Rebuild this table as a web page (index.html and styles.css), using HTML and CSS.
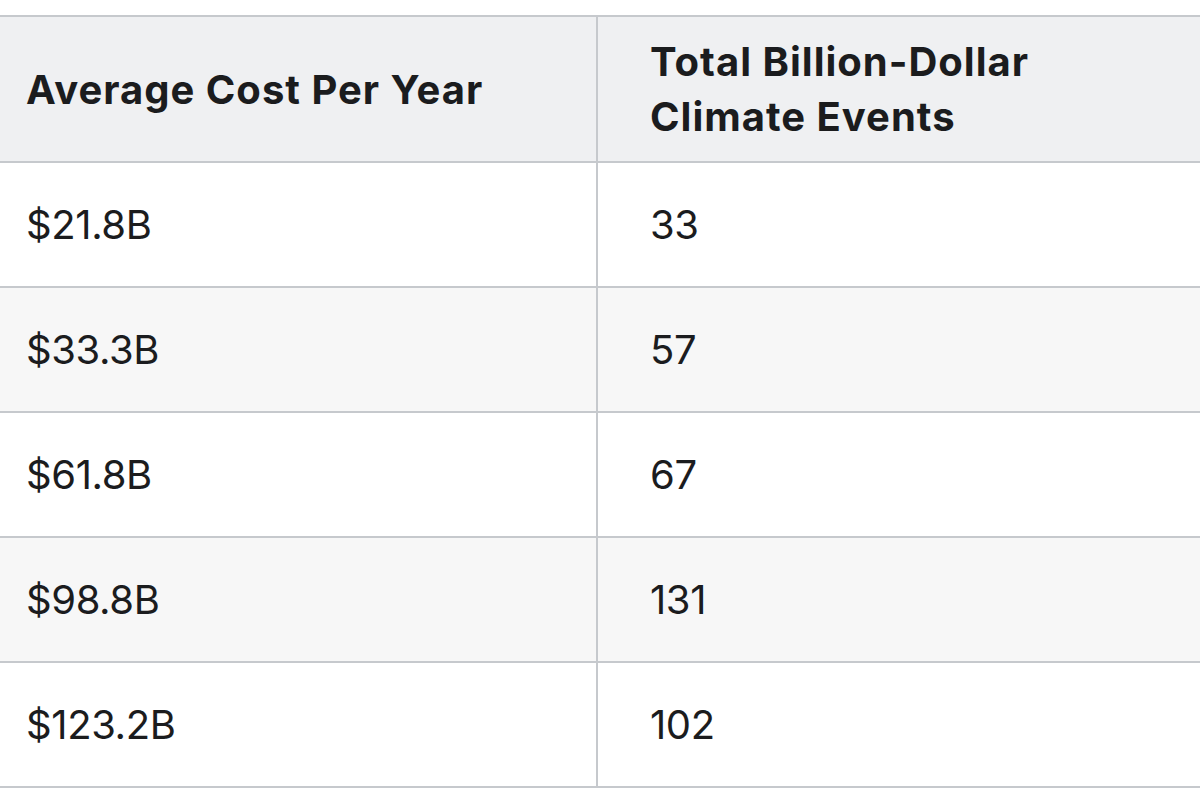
FILE: index.html
```html
<!DOCTYPE html>
<html>
<head>
<meta charset="utf-8">
<link rel="stylesheet" href="styles.css">
</head>
<body>
<div class="page">
  <table class="data-table">
    <thead>
      <tr>
        <th class="col-cost">Average Cost Per Year</th>
        <th class="col-events">Total Billion-Dollar Climate Events</th>
      </tr>
    </thead>
    <tbody>
      <tr><td>$21.8B</td><td>33</td></tr>
      <tr class="alt"><td>$33.3B</td><td>57</td></tr>
      <tr><td>$61.8B</td><td>67</td></tr>
      <tr class="alt"><td>$98.8B</td><td>131</td></tr>
      <tr><td>$123.2B</td><td>102</td></tr>
    </tbody>
  </table>
</div>
</body>
</html>
```

FILE: styles.css
```css
html, body {
  margin: 0;
  padding: 0;
  background: #ffffff;
  overflow: hidden;
}

.page {
  padding-top: 15px;
  margin-left: -28px;
  width: 1230px;
}

.data-table {
  border-collapse: collapse;
  width: 1230px;
  table-layout: fixed;
  font-family: Inter, "Noto Sans", sans-serif;
  color: #1b1c1e;
}

.col-cost {
  width: 518px;
}

.data-table th,
.data-table td {
  border: 2px solid #c6c9cd;
  text-align: left;
  vertical-align: middle;
  padding: 34px 52px;
  font-size: 40px;
  line-height: 55px;
  letter-spacing: -0.4px;
}

.data-table th {
  background: #eff0f2;
  font-weight: 700;
  letter-spacing: 1px;
  padding-top: 17px;
  padding-bottom: 17px;
  height: 110px;
  box-sizing: content-box;
}

.data-table td {
  font-weight: 400;
  background: #ffffff;
}

.data-table tr.alt td {
  background: #f7f7f7;
}
```
